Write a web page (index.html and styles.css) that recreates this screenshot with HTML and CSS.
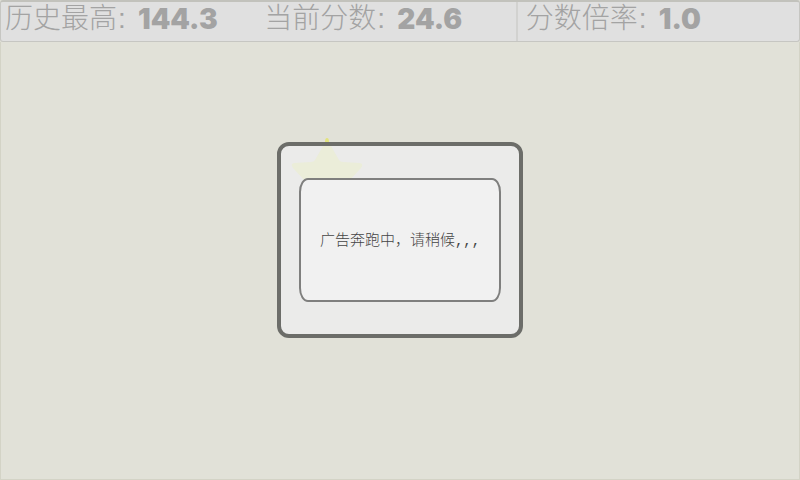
FILE: index.html
```html
<!DOCTYPE html>
<html lang="zh-CN">
<head>
    <meta charset="UTF-8">
    <meta name="viewport" content="width=device-width,initial-scale=1.0">
    <title>分数</title>
    <link rel="stylesheet" href="styles.css">
</head>
<body>
<div class="game">
    <ul class="scores">
        <li><span class="label">历史最高</span><span class="colon">:</span><b>144.3</b></li>
        <li><span class="label">当前分数</span><span class="colon">:</span><b>24.6</b></li>
        <li class="rate"><span class="label">分数倍率</span><span class="colon">:</span><b>1.0</b></li>
    </ul>
    <div class="stage"></div>
    <div class="mask">
        <div class="dialog" role="dialog" aria-labelledby="msg">
            <svg class="star" width="72" height="70" viewBox="0 0 72 70" aria-hidden="true">
                <path d="M32 9 H40 L48 23 Q49 25 52 25 L69 26 Q73 27 70 31 L58 44 L61 66 L36 56 L11 66 L14 44 L2 31 Q-1 27 3 26 L20 25 Q23 25 24 23 Z" fill="#ebedd9"/>
                <path d="M34 5 Q34 1 36 1 Q38 1 38 5 Z" fill="#e2e37e"/>
            </svg>
            <div class="panel">
                <p id="msg">广告奔跑中，请稍候<span class="dots">,,,</span></p>
            </div>
        </div>
    </div>
</div>
</body>
</html>
```

FILE: styles.css
```css
body, ul, li, p {
    margin: 0;
    padding: 0;
    list-style: none;
}

body {
    background: #e1e1d8;
    font-family: "Noto Sans CJK SC", sans-serif;
}

.game {
    position: relative;
    display: flex;
    flex-direction: column;
    min-height: 100vh;
}

.scores {
    display: grid;
    grid-template-columns: 129fr 129fr 142fr;
    box-sizing: border-box;
    height: 42px;
    border: 1px solid #c6c6c2;
    border-top: 2px solid #c2c2bc;
    border-radius: 3px;
    background: #e0e0e0;
    font-family: "Liberation Sans", "Noto Sans CJK SC", sans-serif;
}

.scores li {
    display: flex;
    align-items: center;
    padding-left: 6px;
    line-height: 34px;
    padding-bottom: 5px;
    color: #a3a3a3;
    white-space: nowrap;
}

.scores li:first-child {
    padding-left: 4px;
}

.scores .rate {
    padding-left: 8px;
    border-left: 2px solid #d2d2d0;
}

.label {
    font-size: 28px;
    font-weight: 300;
}

.colon {
    width: 20px;
    padding-left: 1px;
    font-size: 28px;
}

.scores b {
    font-family: Inter, "Open Sans", sans-serif;
    font-size: 28px;
    font-weight: 900;
}

.stage {
    flex: 1;
    border: 1px solid #d3d3c6;
    border-top: none;
}

/* 弹窗居中 */
.mask {
    position: absolute;
    inset: 0;
    display: flex;
    align-items: center;
    justify-content: center;
}

.dialog {
    position: relative;
    padding: 32px 18px;
    border: 4px solid #6c6d69;
    border-radius: 12px;
    background: #ebebea;
}

.star {
    position: absolute;
    top: -9px;
    left: 10px;
}

.panel {
    position: relative;
    display: flex;
    align-items: center;
    justify-content: center;
    box-sizing: border-box;
    min-width: 202px;
    min-height: 124px;
    border: 2px solid #7f7f7e;
    border-radius: 9px / 14px;
    background: #f1f1f1;
}

.panel p {
    color: #444;
    font-size: 15px;
    font-weight: 300;
    line-height: 24px;
}

.dots {
    font-family: "Liberation Mono", monospace;
    font-size: 14px;
}
```
